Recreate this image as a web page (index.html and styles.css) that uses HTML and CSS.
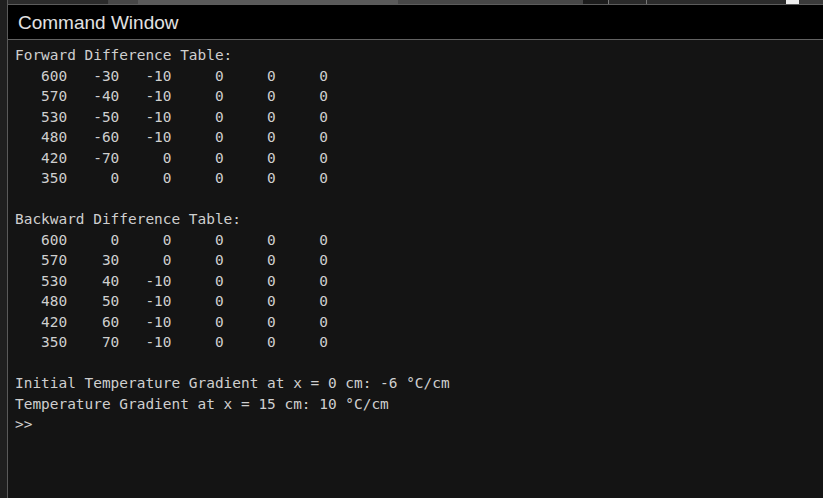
FILE: index.html
```html
<!DOCTYPE html>
<html>
<head>
<meta charset="utf-8">
<link rel="stylesheet" href="styles.css">
</head>
<body>
<div class="app">
  <div class="side"></div>
  <div class="main">
    <div class="topstrip">
      <div class="ts-a"></div>
      <div class="ts-track"><div class="ts-thumb"></div></div>
      <div class="ts-b"></div>
      <div class="ts-c"></div>
      <div class="ts-d"></div>
      <div class="ts-icon"></div>
      <div class="ts-e"></div>
    </div>
    <div class="header">Command Window</div>
    <pre class="console">Forward Difference Table:
   600   -30   -10     0     0     0
   570   -40   -10     0     0     0
   530   -50   -10     0     0     0
   480   -60   -10     0     0     0
   420   -70     0     0     0     0
   350     0     0     0     0     0

Backward Difference Table:
   600     0     0     0     0     0
   570    30     0     0     0     0
   530    40   -10     0     0     0
   480    50   -10     0     0     0
   420    60   -10     0     0     0
   350    70   -10     0     0     0

Initial Temperature Gradient at x = 0 cm: -6 °C/cm
Temperature Gradient at x = 15 cm: 10 °C/cm
&gt;&gt;</pre>
  </div>
</div>
</body>
</html>
```

FILE: styles.css
```css
html, body {
  margin: 0;
  padding: 0;
  width: 823px;
  height: 498px;
  overflow: hidden;
  background: #141414;
}
.app {
  display: flex;
  height: 498px;
}
.side {
  width: 7px;
  flex: none;
  background: #1f1f1f;
  border-right: 1px solid #5a5a5a;
}
.main {
  flex: 1;
  display: flex;
  flex-direction: column;
  min-width: 0;
}
.topstrip {
  height: 4px;
  display: flex;
  border-bottom: 1px solid #5c5c5c;
  background: #222;
}
.ts-a { width: 100px; background: #2b2b2b; border-right: 1px solid #444; }
.ts-track { width: 474px; background: #474747; position: relative; }
.ts-thumb { position: absolute; left: 29px; width: 260px; top: 0; bottom: 0; background: #5a5a5a; }
.ts-b { width: 25px; background: #1c1c1c; border-right: 1px solid #777; }
.ts-c { width: 37px; background: #2a2a2a; border-right: 1px solid #777; }
.ts-d { width: 139px; background: #2b2b2b; }
.ts-icon { width: 13px; background: #eeeeee; }
.ts-e { flex: 1; background: #3a3a3a; }
.header {
  height: 32px;
  padding-top: 2px;
  background: #000;
  border-bottom: 1px solid #626262;
  color: #e2e2e2;
  font-family: "Liberation Sans", Arial, sans-serif;
  font-size: 19px;
  line-height: 32px;
  padding-left: 10px;
}
.console {
  margin: 0;
  padding: 5px 0 0 7px;
  flex: 1;
  color: #cfcfcf;
  font-family: "DejaVu Sans Mono", "Liberation Mono", monospace;
  font-size: 14.45px;
  line-height: 20.5px;
  white-space: pre;
}
```
